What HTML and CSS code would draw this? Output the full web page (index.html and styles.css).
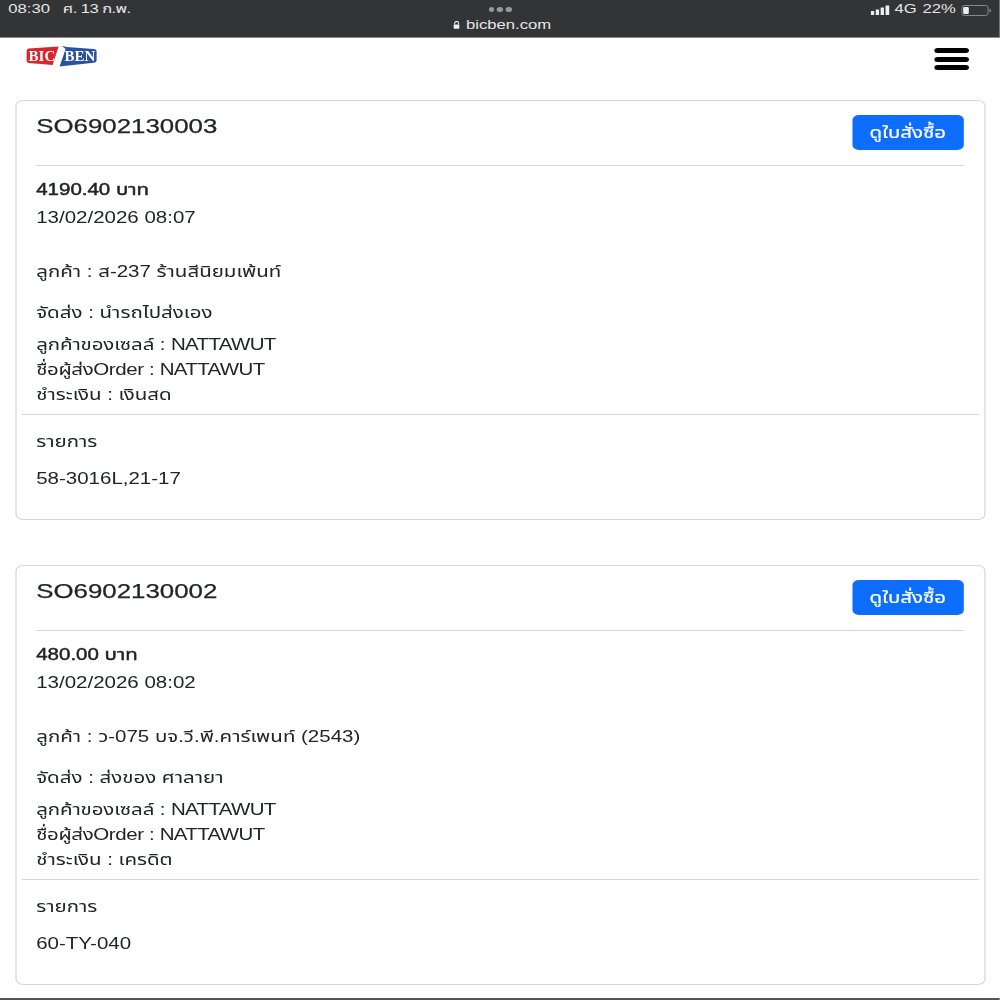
FILE: index.html
```html
<!DOCTYPE html>
<html lang="th">
<head>
<meta charset="utf-8">
<title>bicben.com</title>
<link rel="stylesheet" href="styles.css">
</head>
<body>
<div class="screen">
  <header class="status">
    <div class="status-left"><span>08:30</span><span class="status-date">ศ. 13 ก.พ.</span></div>
    <div class="status-mid">
      <div class="dots"><i></i><i></i><i></i></div>
      <div class="url"><svg class="lock" viewBox="0 0 7 8" preserveAspectRatio="none"><path d="M1.5 3.5V2.4a2 2 0 0 1 4 0v1.1" fill="none" stroke="#eee" stroke-width="1"/><rect x="0.5" y="3.4" width="6" height="4.4" rx="0.8" fill="#eee"/></svg><span>bicben.com</span></div>
    </div>
    <div class="status-right">
      <svg class="signal" viewBox="0 0 21 10" preserveAspectRatio="none"><rect x="0.5" y="6" width="3.4" height="4" fill="#eee"/><rect x="5.5" y="4.5" width="3.4" height="5.5" fill="#eee"/><rect x="10.5" y="2.5" width="3.4" height="7.5" fill="#eee"/><rect x="15.5" y="0.5" width="3.8" height="9.5" fill="#eee"/></svg>
      <span>4G</span><span>22%</span>
      <svg class="battery" viewBox="0 0 32 11" preserveAspectRatio="none"><rect x="0.5" y="0.5" width="28" height="10" rx="2.5" fill="none" stroke="#8a8a8a"/><rect x="2" y="2" width="6" height="7" rx="1.2" fill="#eee"/><rect x="30" y="4" width="1.5" height="3" fill="#8a8a8a"/></svg>
    </div>
  </header>
  <nav class="topnav">
    <svg class="logo" viewBox="0 0 72 23" preserveAspectRatio="none" role="img" aria-label="Bic Ben">
      <path d="M3 3.5 L33 1.5 L27 20 L3 18 Q1 17.5 1 15.5 V6 Q1 3.8 3 3.5Z" fill="#d8252e"/>
      <path d="M36 0.8 L41 2 L68 4 Q71 4.3 71 6.5 V15 Q71 17.5 68 17.8 L34 21.5 L40 4 Z" fill="#2a52a4"/>
      <text class="logo-text" x="3" y="15.5">BIC</text>
      <text class="logo-text" x="39" y="15.5">BEN</text>
    </svg>
    <div class="burger"><i></i><i></i><i></i></div>
  </nav>

  <main class="orders">
    <article class="card">
      <div class="card-head">
        <h2>SO6902130003</h2>
        <a class="btn">ดูใบสั่งซื้อ</a>
      </div>
      <div class="amount">4190.40 บาท</div>
      <div class="date">13/02/2026 08:07</div>
      <div class="customer">ลูกค้า : ส-237 ร้านสีนิยมเพ้นท์</div>
      <div class="ship">จัดส่ง : นำรถไปส่งเอง</div>
      <div class="row first">ลูกค้าของเซลล์ : <span class="name">NATTAWUT</span></div>
      <div class="row sender">ชื่อผู้ส่งOrder : <span class="name">NATTAWUT</span></div>
      <div class="row">ชำระเงิน : เงินสด</div>
      <hr class="split">
      <div class="row">รายการ</div>
      <div class="row items">58-3016L,21-17</div>
    </article>

    <article class="card">
      <div class="card-head">
        <h2>SO6902130002</h2>
        <a class="btn">ดูใบสั่งซื้อ</a>
      </div>
      <div class="amount">480.00 บาท</div>
      <div class="date">13/02/2026 08:02</div>
      <div class="customer">ลูกค้า : ว-075 บจ.วี.พี.คาร์เพนท์ (2543)</div>
      <div class="ship">จัดส่ง : ส่งของ ศาลายา</div>
      <div class="row first">ลูกค้าของเซลล์ : <span class="name">NATTAWUT</span></div>
      <div class="row sender">ชื่อผู้ส่งOrder : <span class="name">NATTAWUT</span></div>
      <div class="row">ชำระเงิน : เครดิต</div>
      <hr class="split">
      <div class="row">รายการ</div>
      <div class="row items">60-TY-040</div>
    </article>
  </main>
  <div class="edge"></div>
</div>
</body>
</html>
```
FILE: styles.css
```css
html, body {
  margin: 0;
  padding: 0;
  height: 1000px;
  overflow: hidden;
  background: #fff;
}

/* The reference is a tablet capture stretched horizontally */
.screen {
  width: 781.25px;
  height: 1000px;
  display: flex;
  flex-direction: column;
  transform: scaleX(1.28);
  transform-origin: 0 0;
  font-family: "Liberation Sans", "Noto Sans Thai", "Noto Sans", sans-serif;
  font-size: 16px;
  color: #212529;
}

.status {
  height: 37px;
  flex: none;
  background: #333436;
  border-bottom: 1px solid #8c8c8c;
  color: #e6e6e6;
  font-size: 13px;
  line-height: 16px;
  display: grid;
  grid-template-columns: 1fr auto 1fr;
  padding: 0 6.5px;
}
.status-left {
  display: flex;
  gap: 10px;
  padding-top: 1px;
}
.status-date {
  letter-spacing: -0.45px;
}
.status-mid {
  display: flex;
  flex-direction: column;
  align-items: center;
  padding-top: 7px;
}
.dots {
  display: flex;
  gap: 2px;
  height: 5px;
}
.dots i {
  width: 4.6px;
  height: 5px;
  border-radius: 50%;
  background: #9a9a9a;
}
.url {
  display: flex;
  align-items: center;
  gap: 5px;
  margin-top: 5px;
  margin-left: 3px;
}
.lock {
  width: 5.5px;
  height: 8px;
}
.status-right {
  display: flex;
  justify-content: flex-end;
  align-items: flex-start;
  gap: 4.5px;
  padding-top: 1px;
}
.signal {
  width: 16px;
  height: 10px;
  margin-top: 4px;
  margin-right: -1.5px;
}
.battery {
  width: 23.5px;
  height: 11px;
  margin-top: 3.5px;
}

.topnav {
  height: 62px;
  flex: none;
  box-sizing: border-box;
  display: flex;
  justify-content: space-between;
  align-items: flex-start;
  padding: 7px 24px 0 20px;
}
.logo {
  width: 56.25px;
  height: 23px;
}
.logo-text {
  font-family: "Liberation Serif", serif;
  font-weight: 700;
  font-size: 15px;
  fill: #fff;
}
.burger {
  width: 27.5px;
  display: flex;
  flex-direction: column;
  gap: 3.5px;
  padding-top: 3px;
}
.burger i {
  display: block;
  height: 5px;
  border-radius: 3px;
  background: #000;
}

.orders {
  display: flex;
  flex-direction: column;
  gap: 45px;
  padding: 0 11.7px 0 11.5px;
}
.card {
  height: 420px;
  box-sizing: border-box;
  border: 1px solid #d6d7d8;
  border-radius: 6px;
  padding: 0 4px;
  line-height: 25px;
}
.card-head {
  display: flex;
  justify-content: space-between;
  align-items: flex-start;
  margin: 0 11.8px 0 11.8px;
  height: 65px;
  box-sizing: border-box;
  border-bottom: 1px solid #d6d7d8;
  padding-top: 14px;
}
.card-head h2 {
  margin: -1px 0 0;
  font-size: 20.2px;
  font-weight: 400;
  line-height: 24px;
  -webkit-text-stroke: 0.25px #212529;
}
.btn {
  width: 87px;
  height: 35px;
  display: flex;
  align-items: center;
  justify-content: center;
  background: #0d6efd;
  color: #fff;
  border-radius: 5px;
  font-size: 16px;
  line-height: 35px;
  -webkit-text-stroke: 0.2px #fff;
}
.amount,
.date,
.customer,
.ship,
.row {
  padding: 0 11.8px;
  white-space: nowrap;
}
.amount {
  margin-top: 10px;
  line-height: 28px;
  -webkit-text-stroke: 0.45px #212529;
}
.date {
  line-height: 28px;
}
.customer {
  margin-top: 26.5px;
}
.ship {
  margin-top: 16px;
}
.first {
  margin-top: 7px;
  letter-spacing: -0.1px;
}
.sender {
  letter-spacing: -0.3px;
}
.name {
  letter-spacing: -0.5px;
}
.split {
  margin: 7px 0 14px;
  border: 0;
  border-top: 1px solid #d6d7d8;
}
.items {
  margin-top: 12px;
}

.edge {
  margin-top: auto;
  height: 2px;
  flex: none;
  background: #555;
}
```
